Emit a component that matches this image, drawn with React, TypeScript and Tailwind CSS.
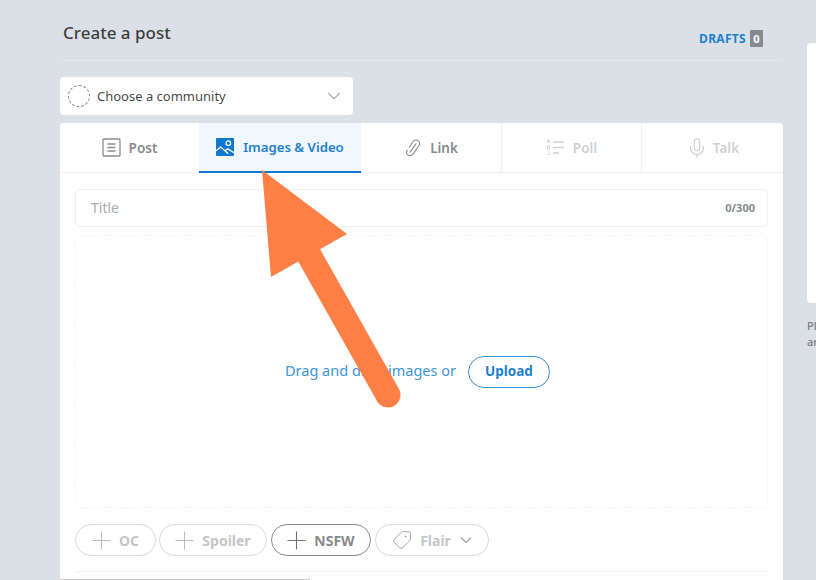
import { ChevronDown, Mic, Tag } from "lucide-react";

function PostIcon() {
  return (
    <svg width="19" height="19" viewBox="0 0 19 19" fill="none" stroke="#8a8c8e" strokeWidth="1.3">
      <rect x="1" y="1" width="17" height="17" rx="1" />
      <path d="M5.5 6h8M5.5 9.5h8M5.5 13h8" />
    </svg>
  );
}

function ImageIcon() {
  return (
    <svg width="18" height="18" viewBox="0 0 19 19">
      <rect width="19" height="19" rx="1" fill="#0f79d0" />
      <circle cx="13" cy="5.5" r="2.4" fill="none" stroke="#fff" strokeWidth="1.3" />
      <path d="M0 13.5 5 9.5 13 16.5M9.5 13.5 12.5 11.5 19 15.5" fill="none" stroke="#fff" strokeWidth="1.4" />
    </svg>
  );
}

function LinkIcon() {
  return (
    <svg width="18" height="22" viewBox="0 0 18 22" fill="none" stroke="#8f9193" strokeWidth="1.2" strokeLinecap="round">
      <g transform="rotate(35 9 11)">
        <path d="M5.500 12.500V5.500a3.500 3.500 0 0 1 7 0v10.500a3.500 3.500 0 0 1-7 0" />
        <path d="M9 6v10" />
      </g>
    </svg>
  );
}

function PollIcon() {
  return (
    <svg width="19" height="17" viewBox="0 0 19 17" fill="none" stroke="#d0d1d2" strokeWidth="1.3">
      <path d="M7 3h11M7 8.500h11M7 14h6" />
      <path d="M1 4l1.500-3L4 4M1.300 7h2.400v3H1.300zM1.300 13h2.400M1.300 15.500h2.400" strokeWidth="1.100" />
    </svg>
  );
}

function PlusIcon({ color }: { color: string }) {
  return (
    <svg width="19" height="19" viewBox="0 0 19 19" fill="none" stroke={color} strokeWidth="1.1">
      <path d="M9.500 0.500v18M0.500 9.500h18" />
    </svg>
  );
}

type TabProps = { label: string; icon: React.ReactNode; w: string; text: string; gap?: string; border?: boolean };

function Tab({ label, icon, w, text, gap = "gap-[8px]", border }: TabProps) {
  return (
    <div className={`${w} ${gap} h-full flex items-center justify-center border-b border-[#edeff1] ${border ? "border-r" : ""}`}>
      {icon}
      <span className={`pt-[1px] text-[13.500px] font-semibold ${text}`}>{label}</span>
    </div>
  );
}

type PillProps = { label: string; w: string; border: string; text: string; icon: React.ReactNode; trailing?: React.ReactNode };

function Pill({ label, w, border, text, icon, trailing }: PillProps) {
  return (
    <div className={`${w} h-[32px] rounded-full border ${border} flex items-center justify-center gap-[8px]`}>
      {icon}
      <span className={`text-[14px] font-bold ${text}`}>{label}</span>
      {trailing}
    </div>
  );
}

export default function App() {
  return (
    <div className="relative w-[816px] h-[580px] overflow-hidden bg-[#dae0e6] flex font-['Noto_Sans','Open_Sans',sans-serif]">
      <main className="ml-[60px] w-[723px] shrink-0 flex flex-col">
        <header className="h-[61px] border-b border-[#e4e8ec] flex items-start justify-between pl-[3px] pr-[20px]">
          <h1 className="mt-[21px] text-[17px] leading-[24px] font-medium text-[#1c1c1c]/85">Create a post</h1>
          <div className="mt-[30px] flex items-center gap-[4px]">
            <span className="text-[12px] leading-[16px] font-bold tracking-[0.3px] text-[#1f80cc]">DRAFTS</span>
            <span className="w-[13px] h-[17px] bg-[#878a8c] rounded-[1px] text-[11px] leading-[17px] font-bold text-white text-center">0</span>
          </div>
        </header>

        <div className="mt-[16px] w-[293px] h-[38px] shrink-0 bg-white rounded-[4px] flex items-center pl-[8px] pr-[8px]">
          <div className="w-[22px] h-[22px] rounded-full border border-dashed border-[#878a8c]" />
          <span className="ml-[7px] pt-[1px] text-[13px] text-[#1c1c1c]/85">Choose a community</span>
          <ChevronDown className="ml-auto text-[#878a8c]" size={22} strokeWidth={1.1} />
        </div>

        <section className="mt-[8px] flex-1 bg-white rounded-t-[4px] flex flex-col">
          <nav className="h-[50px] shrink-0 flex">
            <Tab w="w-[139px]" label="Post" text="text-[#878a8c]" icon={<PostIcon />} />
            <div className="w-[162px] h-full flex items-center justify-center gap-[9px] bg-[#f0f7fd] border-b-2 border-[#0f79d0]">
              <ImageIcon />
              <span className="pt-[1px] text-[13.200px] font-semibold text-[#1f80cc]">Images &amp; Video</span>
            </div>
            <Tab w="w-[141px]" label="Link" text="text-[#878a8c]" border icon={<LinkIcon />} />
            <Tab w="w-[140px]" label="Poll" text="text-[#d0d1d2]" border icon={<PollIcon />} />
            <Tab w="w-[141px]" label="Talk" gap="gap-[5px]" text="text-[#d0d1d2]" icon={<Mic size={22} strokeWidth={1.1} className="text-[#c8c9ca]" />} />
          </nav>

          <div className="flex-1 flex flex-col px-[15px] pt-[16px]">
            <div className="h-[38px] shrink-0 rounded-[4px] border border-[#edeff1] flex items-center justify-between pl-[15px] pr-[12px]">
              <span className="pb-[2px] text-[14px] text-[#a8aaac]">Title</span>
              <span className="text-[11px] font-bold text-[#878a8c]">0/300</span>
            </div>

            <div className="mt-[8px] h-[273px] shrink-0 rounded-[4px] border border-dashed border-[#f2f3f4] flex items-center justify-center gap-[12px] pr-[8px]">
              <span className="pb-[2px] text-[14.500px] text-[#3d94d6]">Drag and drop images or</span>
              <div className="w-[82px] h-[32px] rounded-full border border-[#3d94d6] flex items-center justify-center text-[13.500px] font-bold text-[#1f80cc]">Upload</div>
            </div>

            <div className="mt-[16px] flex items-center shrink-0">
              <Pill w="w-[81px]" label="OC" border="border-[#d9dadb]" text="text-[#c5c6c7]" icon={<PlusIcon color="#bbbcbd" />} />
              <Pill w="w-[108px] ml-[3px]" label="Spoiler" border="border-[#d9dadb]" text="text-[#c5c6c7]" icon={<PlusIcon color="#bbbcbd" />} />
              <Pill w="w-[100px] ml-[4px]" label="NSFW" border="border-[#878a8c]" text="text-[#878a8c]" icon={<PlusIcon color="#6e7072" />} />
              <Pill
                w="w-[114px] ml-[4px]"
                label="Flair"
                border="border-[#d9dadb]"
                text="text-[#c5c6c7]"
                icon={<Tag size={20} strokeWidth={1} className="text-[#8f9193] rotate-90" />}
                trailing={
                  <svg width="12" height="8" viewBox="0 0 12 8" fill="none" stroke="#a9abad" strokeWidth="1.400" className="ml-[1px]">
                    <path d="M1 1.500 6 6.500 11 1.500" />
                  </svg>
                }
              />
            </div>

            <div className="mt-[15px] border-t border-[#f2f3f4]" />
          </div>
          <div className="h-[1px] w-[250px] bg-[#c8c9ca]" />
        </section>
      </main>

      <aside className="ml-[24px] flex-1 min-w-0">
        <div className="mt-[43px] h-[260px] bg-white rounded-l-[4px]" />
        <p className="mt-[15px] text-[11px] leading-[16px] font-medium text-[#7c7c7c]">Pl<br />ar</p>
      </aside>

      <svg className="absolute left-0 top-0 pointer-events-none" width="816" height="580" viewBox="0 0 816 580">
        <path d="M262 170 347 234 271 277Z" fill="#ff7f47" />
        <path d="M309 255 388 395" stroke="#ff7f47" strokeWidth="25" strokeLinecap="round" />
      </svg>
    </div>
  );
}
